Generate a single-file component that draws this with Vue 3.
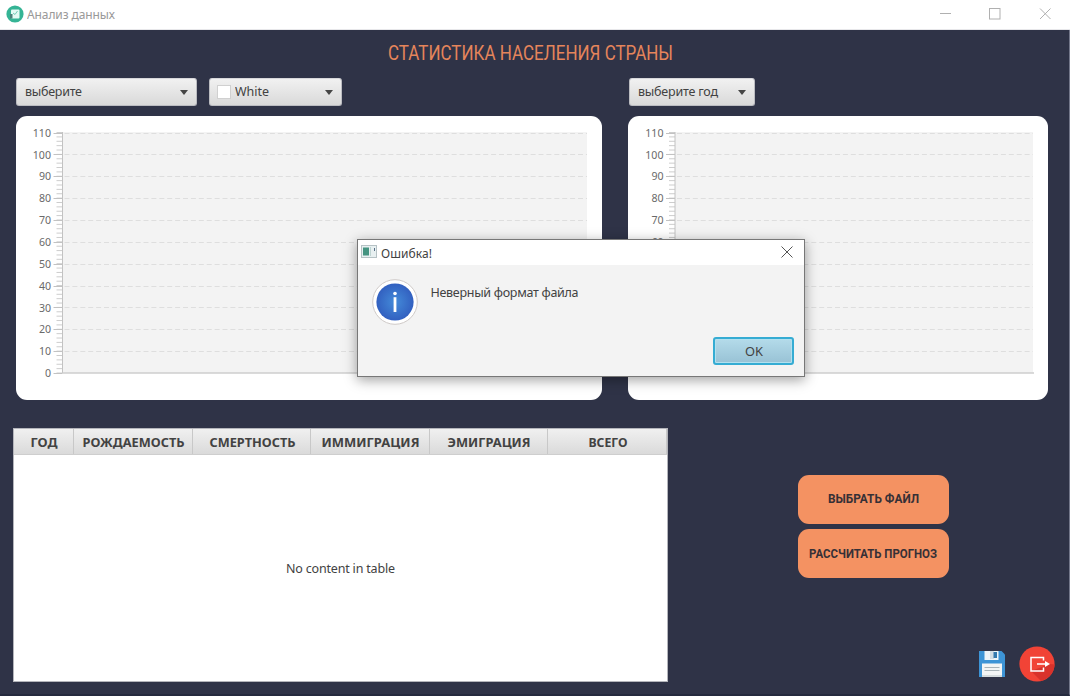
<script setup>
const majors = Array.from({ length: 12 }, (_, i) => ({ value: i * 10, y: 257 - i * 21.86 }))
const minors = Array.from({ length: 56 }, (_, i) => 257 - i * 4.372)
const charts = [
  { id: 'population', width: 586, axis: 46.5, end: 571 },
  { id: 'year', width: 420, axis: 47, end: 405 },
]
const columns = [
  { label: 'ГОД', width: 60, text: 27 },
  { label: 'РОЖДАЕМОСТЬ', width: 119, text: 102 },
  { label: 'СМЕРТНОСТЬ', width: 118, text: 86 },
  { label: 'ИММИГРАЦИЯ', width: 119, text: 98 },
  { label: 'ЭМИГРАЦИЯ', width: 118, text: 83 },
  { label: 'ВСЕГО', width: 119, text: 39 },
]
</script>

<template>
  <div class="window">
    <header class="titlebar">
      <svg class="app-icon" width="18" height="18" viewBox="0 0 18 18">
        <circle cx="9" cy="9" r="8.6" fill="#35b495" />
        <rect x="5" y="4.500" width="8.500" height="9" rx="1" fill="#e4faf4" />
        <path d="M4 9h2.500v4.500H4z" fill="#4b8179" />
        <path d="M7 8l2 1.500L11.500 6" stroke="#74cdb8" fill="none" />
      </svg>
      <svg class="label" width="100" height="26"><text x="0" y="16" font-size="12" textLength="88" fill="#999">Анализ данных</text></svg>
      <svg class="controls" width="130" height="29" viewBox="0 0 130 29" fill="none" stroke="#b0b0b0">
        <path d="M10 13.500H21" />
        <rect x="59.500" y="8.500" width="10.500" height="10.500" />
        <path d="M110 8.500l10.500 10.500M120.500 8.500L110 19" />
      </svg>
    </header>

    <main class="content">
      <svg class="heading" width="1069" height="46">
        <text x="388" y="30" font-size="19.500" textLength="285" lengthAdjust="spacingAndGlyphs">СТАТИСТИКА НАСЕЛЕНИЯ СТРАНЫ</text>
      </svg>

      <div class="toolbar">
        <div class="left-tools">
          <div class="combo wide">
            <svg width="70" height="26"><text x="0" y="17" font-size="12.500" textLength="57">выберите</text></svg>
            <i class="arrow"></i>
          </div>
          <div class="combo color">
            <span class="swatch"></span>
            <svg width="50" height="26"><text x="0" y="17" font-size="12.500" textLength="34">White</text></svg>
            <i class="arrow"></i>
          </div>
        </div>
        <div class="combo year">
          <svg width="90" height="26"><text x="0" y="17" font-size="12.500" textLength="80">выберите год</text></svg>
          <i class="arrow"></i>
        </div>
      </div>

      <div class="charts">
        <section v-for="c in charts" :key="c.id" class="chart">
          <svg :width="c.width" height="284">
            <rect :x="c.axis" y="16" :width="c.end - c.axis" height="241" fill="#f3f3f3" />
            <g stroke="#dedede" stroke-dasharray="5 2.900">
              <path v-for="m in majors.slice(1)" :key="m.value" :d="`M${c.axis + 2} ${Math.round(m.y) + 0.5}H${c.end}`" />
            </g>
            <g stroke="#cdcdcd">
              <path v-for="y in minors" :key="y" :d="`M${c.axis - 6} ${y}H${c.axis}`" />
            </g>
            <g stroke="#c2c2c2">
              <path v-for="m in majors" :key="m.value" :d="`M${c.axis - 9} ${Math.round(m.y) + 0.5}H${c.axis}`" />
              <path :d="`M${c.axis} 16V257`" />
            </g>
            <path :d="`M${c.axis} 257H${c.end + 1}`" stroke="#cecece" stroke-width="1.600" />
            <g class="axis-text">
              <text v-for="m in majors" :key="m.value" :x="c.axis - 11.500" :y="m.y + 4.200">{{ m.value }}</text>
            </g>
          </svg>
        </section>
      </div>

      <div class="lower">
        <section class="table">
          <div class="thead">
            <div v-for="col in columns" :key="col.label" class="th" :style="{ width: col.width + 'px' }">
              <svg :width="col.text + 2" height="25"><text x="1.500" y="18" font-size="12.500" font-weight="700" :textLength="col.text" lengthAdjust="spacingAndGlyphs">{{ col.label }}</text></svg>
            </div>
          </div>
          <div class="placeholder">
            <svg width="112" height="22"><text x="1" y="15" font-size="12.500" textLength="109">No content in table</text></svg>
          </div>
        </section>

        <aside class="actions">
          <div class="buttons">
            <button><svg width="110" height="20"><text x="9" y="13.500" font-size="12.500" textLength="91" lengthAdjust="spacingAndGlyphs">ВЫБРАТЬ ФАЙЛ</text></svg></button>
            <button><svg width="145" height="20"><text x="8" y="13.500" font-size="12.500" textLength="128" lengthAdjust="spacingAndGlyphs">РАССЧИТАТЬ ПРОГНОЗ</text></svg></button>
          </div>
          <div class="icons">
            <svg width="28" height="28" viewBox="0 0 28 28">
              <path d="M1 1h22.500l3.500 3.500V27H1z" fill="#3d94d6" />
              <rect x="6.500" y="1" width="14" height="9" fill="#eef4f8" />
              <path d="M12 1h4v8h-4z" fill="#d3dde4" />
              <rect x="15.500" y="2" width="3.500" height="6" fill="#3479ae" />
              <rect x="4" y="13.500" width="20" height="13.500" fill="#f3f5f5" />
              <path d="M6.500 17.500h15M6.500 20.500h15" stroke="#a9b4b8" />
              <path d="M4 25h20v2H4z" fill="#d6dcde" />
            </svg>
            <svg width="36" height="36" viewBox="0 0 36 36">
              <circle cx="18" cy="18" r="17.600" fill="#f14336" />
              <path d="M12 25L22 35.100A17.600 17.600 0 0 0 35.600 18.500L31 18z" fill="#d8322b" />
              <path d="M24.500 14.500V11.500H12V25H24.500V21.500M18 18H27" fill="none" stroke="#fff" stroke-width="1.500" />
              <path d="M26 15l5 3-5 3z" fill="#fff" />
            </svg>
          </div>
        </aside>
      </div>
    </main>

    <div class="dialog">
      <div class="dialog-title">
        <svg width="16" height="14" viewBox="0 0 16 14">
          <rect x=".5" y=".5" width="15" height="12" fill="#e8f0f1" stroke="#b6c2c5" />
          <rect x="2" y="2.500" width="6" height="8" fill="#459481" />
          <path d="M9.500 2v9" stroke="#bfd4d2" />
          <path d="M13.500 3v3" stroke="#556c85" />
        </svg>
        <svg class="dialog-name" width="60" height="25"><text x="0" y="17.500" font-size="12" textLength="51" fill="#222">Ошибка!</text></svg>
        <svg class="close" width="12" height="12" viewBox="0 0 12 12"><path d="M.5 .5l11 11M11.500 .5l-11 11" stroke="#555" /></svg>
      </div>
      <div class="dialog-body">
        <svg class="info" width="46" height="46" viewBox="0 0 46 46">
          <defs>
            <radialGradient id="blue"><stop offset="0" stop-color="#448bd9" /><stop offset="1" stop-color="#3260c0" /></radialGradient>
          </defs>
          <circle cx="23" cy="23" r="22.300" fill="#fff" stroke="#cfcac8" />
          <circle cx="23" cy="23" r="18.600" fill="url(#blue)" />
          <circle cx="23" cy="14.500" r="1.800" fill="#fff" />
          <path d="M23 18.200V33" stroke="#fff" stroke-width="2.800" />
        </svg>
        <svg class="message" width="160" height="24"><text x=".5" y="16" font-size="12.500" textLength="148">Неверный формат файла</text></svg>
        <button class="ok"><svg width="24" height="20"><text x="3" y="15" font-size="12.500" textLength="18" lengthAdjust="spacingAndGlyphs">OK</text></svg></button>
      </div>
    </div>
  </div>
</template>

<style>
body { margin: 0; overflow: hidden; }
</style>

<style scoped>
* { box-sizing: border-box; }
.window { position: relative; width: 1070px; height: 696px; display: flex; flex-direction: column; background: #2f3347; font-family: "Noto Sans", "Open Sans", sans-serif; color: #333; }
svg { display: block; flex: none; }
text { fill: #424242; }
.titlebar { height: 30px; flex: none; display: flex; background: #fff; border-bottom: 1px solid #e7e7ea; padding-left: 6px; }
.app-icon { margin-top: 5px; }
.label { margin: 3px 0 0 3px; }
.label text { fill: #999; }
.controls { margin-left: auto; margin-right: 10px; }
.content { flex: 1; display: flex; flex-direction: column; border-right: 1px solid #73778a; border-bottom: 2px solid #252a3e; }
.heading text { font-family: Roboto, sans-serif; font-weight: 400; fill: #e5855b; }
.toolbar { height: 40px; padding: 2px 0 0 15.500px; display: grid; grid-template-columns: 613px 126px; }
.left-tools { display: flex; gap: 12px; }
.combo { height: 28px; display: flex; align-items: center; padding: 0 8px; background: linear-gradient(#f1f1f1, #d9d9d9); border: 1px solid #bbbcc1; border-top-color: #d7d7da; border-radius: 3px; }
.combo.wide { width: 181px; }
.combo.color { width: 133px; }
.combo.year { width: 126px; }
.swatch { width: 14px; height: 14px; background: #fff; border: 1px solid #d0d0d0; margin-right: 4px; margin-left: -1px; }
.arrow { margin-left: auto; border: 4.500px solid transparent; border-top: 5px solid #454545; border-bottom: 0; }
.charts { display: flex; gap: 26.500px; padding-left: 15.500px; height: 284px; margin-top: .4px; }
.chart { background: #fff; border-radius: 11px; height: 284px; overflow: hidden; }
.axis-text text { font-size: 10.600px; text-anchor: end; fill: #6a6a6a; }
.lower { display: flex; padding: 28px 0 0 13px; }
.table { width: 655px; height: 254px; background: #fff; border: 1px solid #b4b5bb; }
.thead { display: flex; height: 26px; background: linear-gradient(#f0f0f0, #dadada); border-bottom: 1px solid #cecece; }
.th { display: flex; justify-content: center; border-right: 1px solid #c8c8c8; }
.placeholder { height: 227px; display: flex; justify-content: center; align-items: center; }
.actions { flex: 1; display: flex; flex-direction: column; align-items: flex-end; }
.buttons { margin: 46.500px 120px 0 0; display: grid; gap: 5.500px; }
button { font: inherit; display: grid; place-items: center; padding: 0; border: 0; }
.buttons button { width: 151px; height: 49px; background: #f49262; border-radius: 11px; }
.buttons text { font-family: Roboto, sans-serif; font-weight: 700; fill: #363036; }
.icons { display: flex; gap: 13px; align-items: center; margin: 68px 14px 0 0; }
.dialog { position: absolute; left: 357px; top: 239px; width: 448px; height: 138px; background: #f3f3f3; border: 1px solid #777; box-shadow: 0 3px 12px rgba(0, 0, 0, .38); }
.dialog-title { height: 25px; background: #fff; display: flex; padding: 5px 11px 0 3px; }
.dialog-name { margin: -5px 0 0 4px; }
.close { margin: 1px 0 0 auto; }
.dialog-body { height: 111px; display: grid; grid-template-columns: 59px 1fr; grid-template-rows: 59px 28px; padding: 13px 10px 0 13px; }
.info { margin: .5px 0 0 .5px; }
.message { margin-top: 3px; }
.ok { grid-column: 2; justify-self: end; width: 81px; height: 28px; border: 2px solid #35acd3; border-radius: 3px; background: linear-gradient(#b4dbea, #98c2d5); box-shadow: inset 0 0 0 1px #b2e0ef; }
</style>
